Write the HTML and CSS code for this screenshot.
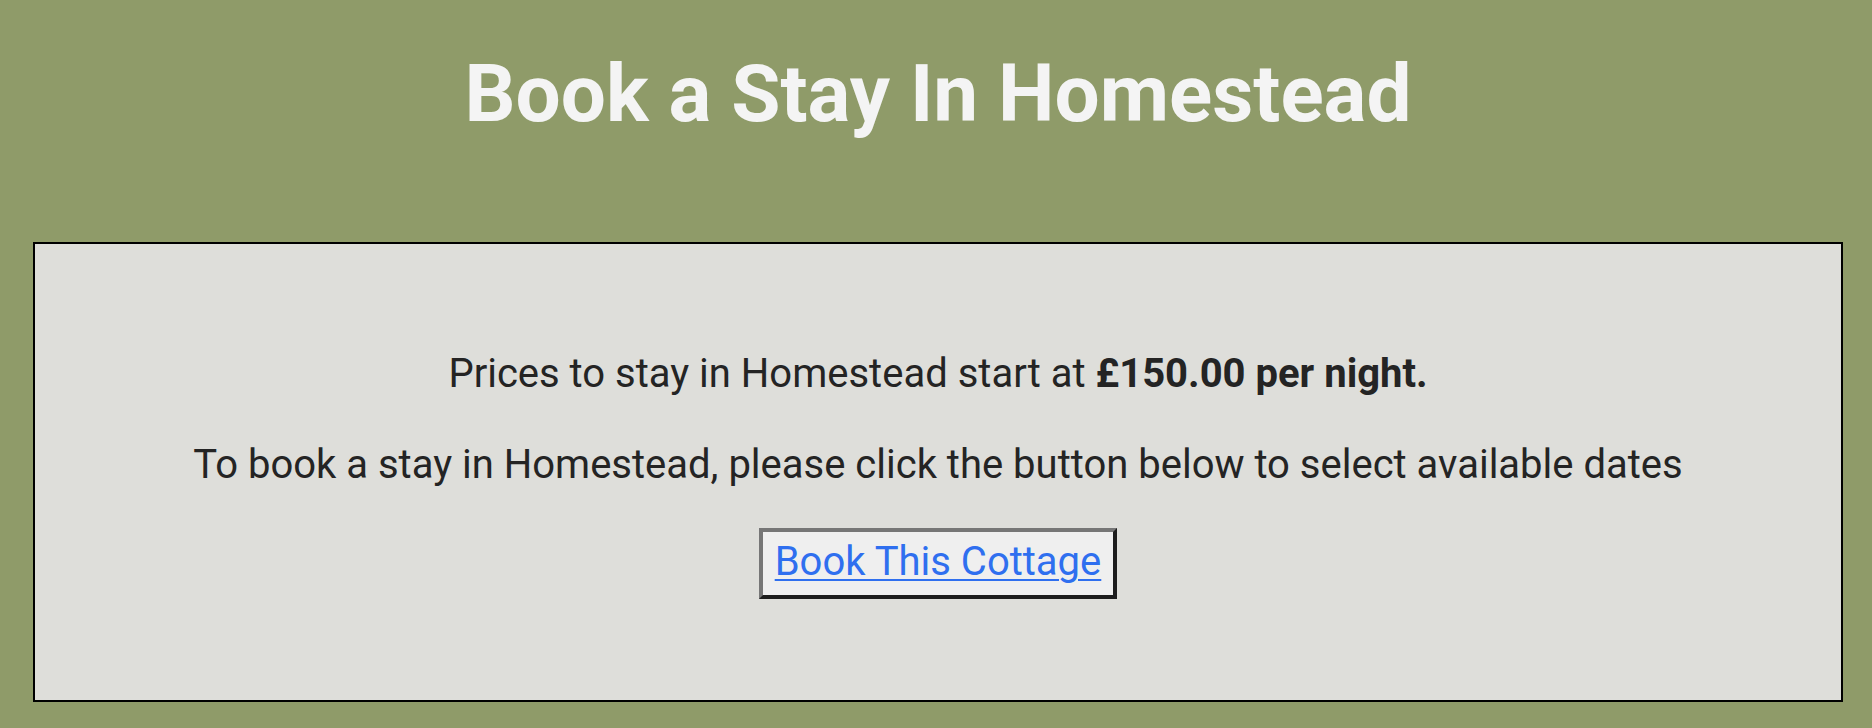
FILE: index.html
```html
<!DOCTYPE html>
<html lang="en">
<head>
<meta charset="utf-8">
<title>Book a Stay In Homestead</title>
<link rel="stylesheet" href="styles.css">
</head>
<body>
<main class="page">
  <h1 class="title">Book a Stay In Homestead</h1>
  <section class="booking">
    <p class="line">Prices to stay in Homestead start at <strong>£150.00 per night.</strong></p>
    <p class="line">To book a stay in Homestead, please click the button below to select available dates</p>
    <button class="book-btn" type="button"><a class="book-link" href="#">Book This Cottage</a></button>
  </section>
</main>
</body>
</html>
```

FILE: styles.css
```css
html, body {
  margin: 0;
  padding: 0;
}

body {
  background: #8f9b69;
  font-family: Roboto, "Liberation Sans", sans-serif;
  color: #242424;
}

.page {
  display: flex;
  flex-direction: column;
  padding: 47px 29px 26px 33px;
}

.title {
  margin: 0;
  font-size: 80px;
  font-weight: 700;
  line-height: normal;
  color: #f4f4f4;
  text-align: center;
}

.booking {
  margin-top: 101px;
  height: 456px;
  box-sizing: content-box;
  border: 2px solid #000;
  background: #dededa;
  display: flex;
  flex-direction: column;
  align-items: center;
  padding: 0;
}

.line {
  margin: 105px 0 0;
  font-size: 40px;
  line-height: 50px;
  text-align: center;
}

.line + .line {
  margin-top: 41px;
}

.line strong {
  font-weight: 700;
}

.book-btn {
  margin-top: 38px;
  font-family: Roboto, "Liberation Sans", sans-serif;
  font-size: 40px;
  line-height: normal;
  background: #efefef;
  border-style: solid;
  border-width: 4px;
  border-color: #767676 #1d1d1d #1d1d1d #767676;
  padding: 6px 12px 10px;
  cursor: pointer;
}

.book-link {
  color: #2f6fef;
  text-decoration: underline;
  text-decoration-thickness: 2px;
  text-underline-offset: 4px;
}
```
